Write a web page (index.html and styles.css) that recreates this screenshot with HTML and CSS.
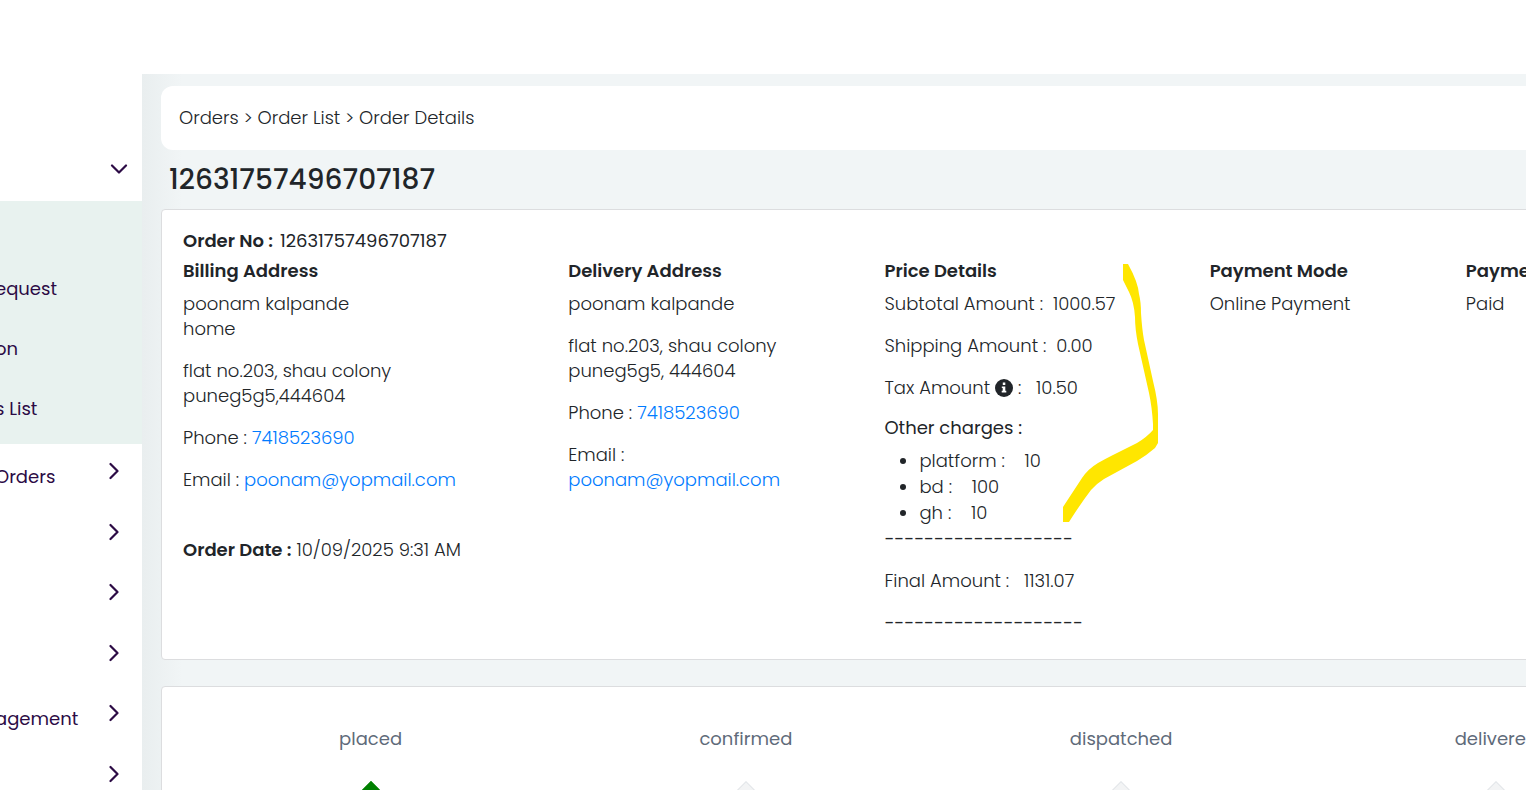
FILE: index.html
```html
<!DOCTYPE html>
<html lang="en">
<head>
  <meta charset="UTF-8">
  <meta name="viewport" content="width=device-width, initial-scale=1.0">
  <title>Order Details</title>
  <link rel="stylesheet" href="styles.css">
</head>
<body>
  <svg class="sprite" aria-hidden="true">
    <symbol id="chevron" viewBox="0 0 10 18">
      <path d="M1.5 2 L8.5 9 L1.5 16" fill="none" stroke="currentColor" stroke-width="2.2" stroke-linecap="round" stroke-linejoin="round"/>
    </symbol>
  </svg>

  <header class="topbar"></header>

  <div class="layout">
    <nav class="sidebar">
      <button class="menu-toggle" aria-label="Collapse orders">
        <svg width="18" height="10" viewBox="0 0 18 10"><path d="M2 1.5 L9 8.5 L16 1.5" fill="none" stroke="currentColor" stroke-width="2.2" stroke-linecap="round" stroke-linejoin="round"/></svg>
      </button>
      <div class="submenu">
        <a href="#"><span>equest</span></a>
        <a href="#"><span>on</span></a>
        <a href="#"><span>s List</span></a>
      </div>
      <div class="menu">
        <a href="#"><span>Orders</span><svg class="arrow"><use href="#chevron"/></svg></a>
        <a href="#"><span></span><svg class="arrow"><use href="#chevron"/></svg></a>
        <a href="#"><span></span><svg class="arrow"><use href="#chevron"/></svg></a>
        <a href="#"><span></span><svg class="arrow"><use href="#chevron"/></svg></a>
        <a href="#"><span>agement</span><svg class="arrow"><use href="#chevron"/></svg></a>
        <a href="#"><span></span><svg class="arrow"><use href="#chevron"/></svg></a>
      </div>
    </nav>

    <main class="main">
      <div class="content">
        <div class="breadcrumb">Orders &gt; Order List &gt; Order Details</div>
        <h1>12631757496707187</h1>

        <section class="card order">
          <div class="order-no"><b>Order No :</b> <span>12631757496707187</span></div>
          <div class="columns">
            <div class="col">
              <h2>Billing Address</h2>
              <p>poonam kalpande<br>home</p>
              <p>flat no.203, shau colony<br>puneg5g5,444604</p>
              <p>Phone : <a href="tel:7418523690">7418523690</a></p>
              <p>Email : <a href="mailto:poonam@yopmail.com">poonam@yopmail.com</a></p>
              <p class="order-date"><b>Order Date :</b> 10/09/2025 9:31 AM</p>
            </div>
            <div class="col">
              <h2>Delivery Address</h2>
              <p>poonam kalpande</p>
              <p>flat no.203, shau colony<br>puneg5g5, 444604</p>
              <p>Phone : <a href="tel:7418523690">7418523690</a></p>
              <p>Email :<br><a href="mailto:poonam@yopmail.com">poonam@yopmail.com</a></p>
            </div>
            <div class="col price">
              <h2>Price Details</h2>
              <p>Subtotal Amount :&nbsp; 1000.57</p>
              <p>Shipping Amount :&nbsp; 0.00</p>
              <p>Tax Amount <svg class="info" viewBox="0 0 18 18"><circle cx="9" cy="9" r="9" fill="#212529"/><path d="M7.8 3.6h2.5v2.4H7.8z M6.8 7.4h3.5v4.3h1v1.7H6.7v-1.7h1V9.1h-.9z" fill="#fff"/></svg> :&nbsp;&nbsp; 10.50</p>
              <h3>Other charges :</h3>
              <ul>
                <li>platform :&nbsp;&nbsp;&nbsp; 10</li>
                <li>bd :&nbsp;&nbsp;&nbsp; 100</li>
                <li>gh :&nbsp;&nbsp;&nbsp; 10</li>
              </ul>
              <p class="dashes">-------------------</p>
              <p>Final Amount :&nbsp;&nbsp; 1131.07</p>
              <p class="dashes">--------------------</p>
              <svg class="marker" viewBox="0 0 96 258" aria-hidden="true">
                <path fill="#ffe600" d="M60 0 H65 Q75 18 76 30 Q78 38 78 49 Q79 65 81 76 L90 117 Q95 137 95 150 V179 L92 184 Q84 191 74 197 L41 215 Q33 220 28 226 Q18 239 6 258 H0 V243 L19 214 Q25 205 35 199 Q42 195 50 191 L74 179 Q84 173 90 166 V160 Q89 143 86 129 L75 80 Q72 65 72 53 Q71 38 66 28 L60 16 Z"/>
              </svg>
            </div>
            <div class="col">
              <h2>Payment Mode</h2>
              <p>Online Payment</p>
            </div>
            <div class="col">
              <h2>Payment Status</h2>
              <p>Paid</p>
            </div>
          </div>
        </section>

        <section class="card steps">
          <div class="step done">placed<i></i></div>
          <div class="step">confirmed<i></i></div>
          <div class="step">dispatched<i></i></div>
          <div class="step">delivered<i></i></div>
        </section>
      </div>
    </main>
  </div>
</body>
</html>
```
FILE: styles.css
```css
* {
  box-sizing: border-box;
}
body {
  margin: 0;
  height: 100vh;
  overflow: hidden;
  display: flex;
  flex-direction: column;
  background: #fff;
  color: #212529;
  font-family: "Poppins", "Inter", sans-serif;
  font-size: 18px;
  font-weight: 300;
  line-height: 25px;
}
a {
  color: #007bff;
  text-decoration: none;
}
b {
  font-weight: 600;
}
.sprite {
  display: none;
}
.topbar {
  flex: none;
  height: 74px;
}
.layout {
  flex: 1;
  min-height: 0;
  display: flex;
}

/* sidebar */
.sidebar {
  flex: none;
  width: 142px;
  overflow: hidden;
  color: #2c0b45;
  font-weight: 400;
}
.sidebar a {
  display: flex;
  align-items: center;
  color: inherit;
}
.sidebar span {
  margin-left: -5px;
}
.menu-toggle {
  display: flex;
  justify-content: flex-end;
  align-items: center;
  width: 100%;
  height: 127px;
  padding: 62px 14px 0 0;
  border: 0;
  background: none;
  color: inherit;
}
.submenu {
  padding: 57px 0 6px;
  background: #e8f2ef;
}
.submenu a {
  height: 60px;
}
.menu {
  display: grid;
  grid-auto-rows: 1fr;
  height: 363px;
}
.menu a {
  justify-content: space-between;
  padding: 4px 23px 0 0;
}
.arrow {
  width: 10px;
  height: 18px;
  margin-bottom: 10px;
}

/* content */
.main {
  flex: 1;
  min-width: 0;
  overflow: hidden;
  padding: 12px 0 0 19px;
  background: linear-gradient(90deg, #e9eeef, #f1f5f6 40px);
}
.content {
  width: calc(100% + 180px);
}
.breadcrumb {
  padding: 19px 18px 20px;
  border-radius: 12px;
  background: #fff;
}
h1 {
  margin: 13px 8px 12px;
  font-size: 28px;
  line-height: 34px;
  font-weight: 500;
}
.card {
  padding: 18px 21px 7px;
  border: 1px solid #dcdddf;
  border-radius: 4px;
  background: #fff;
}
.order {
  margin-bottom: 26px;
}
.order-no {
  margin-bottom: 5px;
}
.order-no span {
  margin-left: 2px;
  font-weight: 400;
}
.columns {
  display: grid;
  grid-template-columns: 385fr 316fr 325fr 256fr 218fr;
}
.col p {
  margin: 0 0 17px;
}
.col h2 {
  margin: 0 0 8px;
  font-size: 18px;
  line-height: 25px;
  font-weight: 600;
}
.col .order-date {
  margin-top: 45px;
}
.price {
  position: relative;
}
.price h3 {
  margin: 0 0 9px;
  font-size: 18px;
  line-height: 22px;
  font-weight: 400;
}
.price ul {
  margin: 0;
  padding-left: 35px;
  line-height: 26px;
}
.price .dashes {
  font-weight: 400;
}
.info {
  width: 18px;
  height: 18px;
  vertical-align: -3px;
}
/* highlighter stroke over the price column */
.marker {
  position: absolute;
  left: 179px;
  top: 6px;
  width: 96px;
  height: 258px;
}

/* order progress */
.steps {
  display: grid;
  grid-template-columns: repeat(4, 1fr);
  padding: 39px 21px;
}
.step {
  display: flex;
  flex-direction: column;
  align-items: center;
  gap: 35px;
  color: #5f6b7a;
  font-weight: 400;
}
.step i {
  width: 24px;
  height: 24px;
  border: 1px solid #e3e6ea;
  background: #f3f4f5;
  transform: rotate(45deg);
}
.step.done i {
  border-color: #008000;
  background: #008000;
}
```
